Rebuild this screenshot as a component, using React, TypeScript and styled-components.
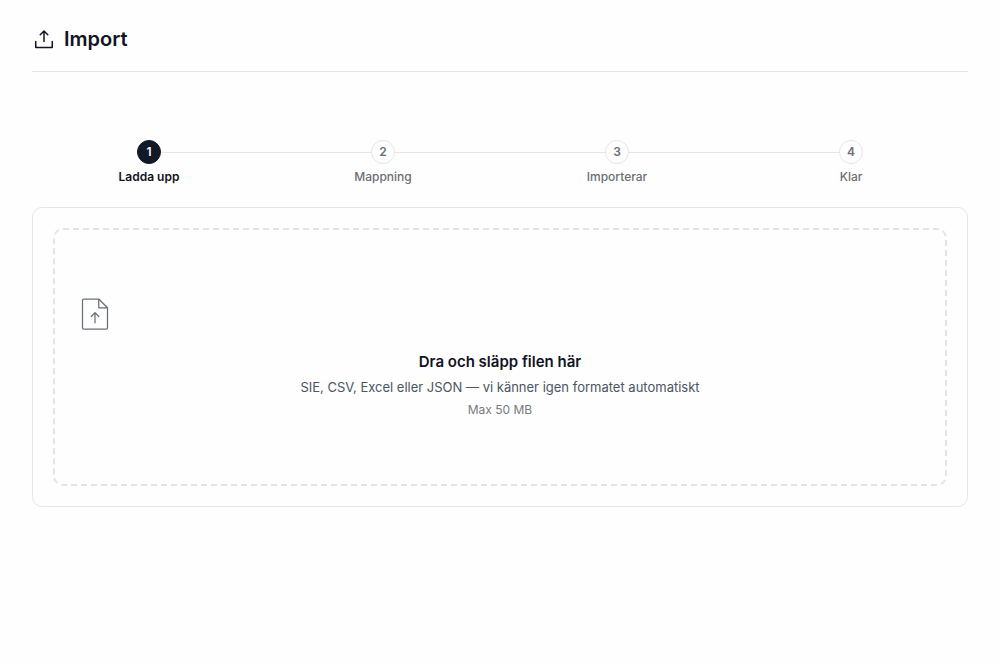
import React from "react";
import styled, { createGlobalStyle } from "styled-components";
import { PiFileArrowUpThin, PiUploadSimple } from "react-icons/pi";

const GlobalStyle = createGlobalStyle`
  *, *::before, *::after { box-sizing: border-box; }
  body {
    margin: 0;
    background: #fefefe;
    color: #111322;
    font-family: Inter, "Liberation Sans", sans-serif;
  }
`;

const Page = styled.main`
  padding: 24px 32px 32px;
`;

const Header = styled.header`
  display: flex;
  align-items: center;
  gap: 8px;
  padding-bottom: 16px;
  border-bottom: 1px solid #e6e6e8;
`;

const Title = styled.h1`
  margin: 0;
  font-size: 20px;
  font-weight: 600;
  line-height: 31px;
`;

const Steps = styled.ol`
  display: flex;
  list-style: none;
  margin: 68px 0 0;
  padding: 0 0 21px;
`;

const Step = styled.li<{ $active: boolean }>`
  flex: 1;
  display: flex;
  flex-direction: column;
  align-items: center;
  gap: 4px;
  font-size: 12px;
  font-weight: ${(p) => (p.$active ? 600 : 500)};
  line-height: 18px;
  color: ${(p) => (p.$active ? "#111322" : "#6b6f76")};
`;

const Track = styled.div`
  align-self: stretch;
  display: flex;
  align-items: center;
`;

const Rail = styled.span<{ $hidden: boolean }>`
  flex: 1;
  height: 1px;
  background: ${(p) => (p.$hidden ? "transparent" : "#e6e6e8")};
`;

const StepNumber = styled.span<{ $active: boolean }>`
  display: flex;
  align-items: center;
  justify-content: center;
  width: 24px;
  height: 24px;
  border: 1px solid ${(p) => (p.$active ? "#111827" : "#e6e6e8")};
  border-radius: 50%;
  background: ${(p) => (p.$active ? "#111827" : "#fefefe")};
  color: ${(p) => (p.$active ? "#ffffff" : "#6b6f76")};
  font-weight: 600;
`;

const Card = styled.section`
  padding: 20px;
  border: 1px solid #e6e6e8;
  border-radius: 10px;
`;

const DropZone = styled.label`
  display: flex;
  flex-direction: column;
  align-items: center;
  gap: 4px;
  padding: 64px 20px 65px;
  border: 2px dashed #e4e4e6;
  border-radius: 10px;
  text-align: center;
  cursor: pointer;

  &:focus-within { border-color: #111827; }
`;

const FileInput = styled.input`
  position: absolute;
  width: 1px;
  height: 1px;
  opacity: 0;
`;

const FileIcon = styled(PiFileArrowUpThin)`
  align-self: flex-start;
  margin-bottom: 13px;
  color: #6b6f76;
`;

const DropTitle = styled.span`
  font-size: 15px;
  font-weight: 600;
  line-height: 22px;
`;

const DropText = styled.span`
  font-size: 13px;
  line-height: 20px;
  color: #4b5563;
`;

const DropHint = styled.span`
  font-size: 12px;
  line-height: 18px;
  color: #77797e;
`;

const steps = ["Ladda upp", "Mappning", "Importerar", "Klar"];

export default function App() {
  const current = 0;
  return (
    <>
      <GlobalStyle />
      <Page>
        <Header>
          <PiUploadSimple size={24} aria-hidden />
          <Title>Import</Title>
        </Header>
        <Steps>
          {steps.map((label, i) => (
            <Step key={label} $active={i === current} aria-current={i === current ? "step" : undefined}>
              <Track>
                <Rail $hidden={i === 0} />
                <StepNumber $active={i === current}>{i + 1}</StepNumber>
                <Rail $hidden={i === steps.length - 1} />
              </Track>
              <span>{label}</span>
            </Step>
          ))}
        </Steps>
        <Card>
          <DropZone>
            <FileInput type="file" accept=".sie,.se,.csv,.xlsx,.xls,.json" />
            <FileIcon size={40} aria-hidden />
            <DropTitle>Dra och släpp filen här</DropTitle>
            <DropText>SIE, CSV, Excel eller JSON — vi känner igen formatet automatiskt</DropText>
            <DropHint>Max 50 MB</DropHint>
          </DropZone>
        </Card>
      </Page>
    </>
  );
}
